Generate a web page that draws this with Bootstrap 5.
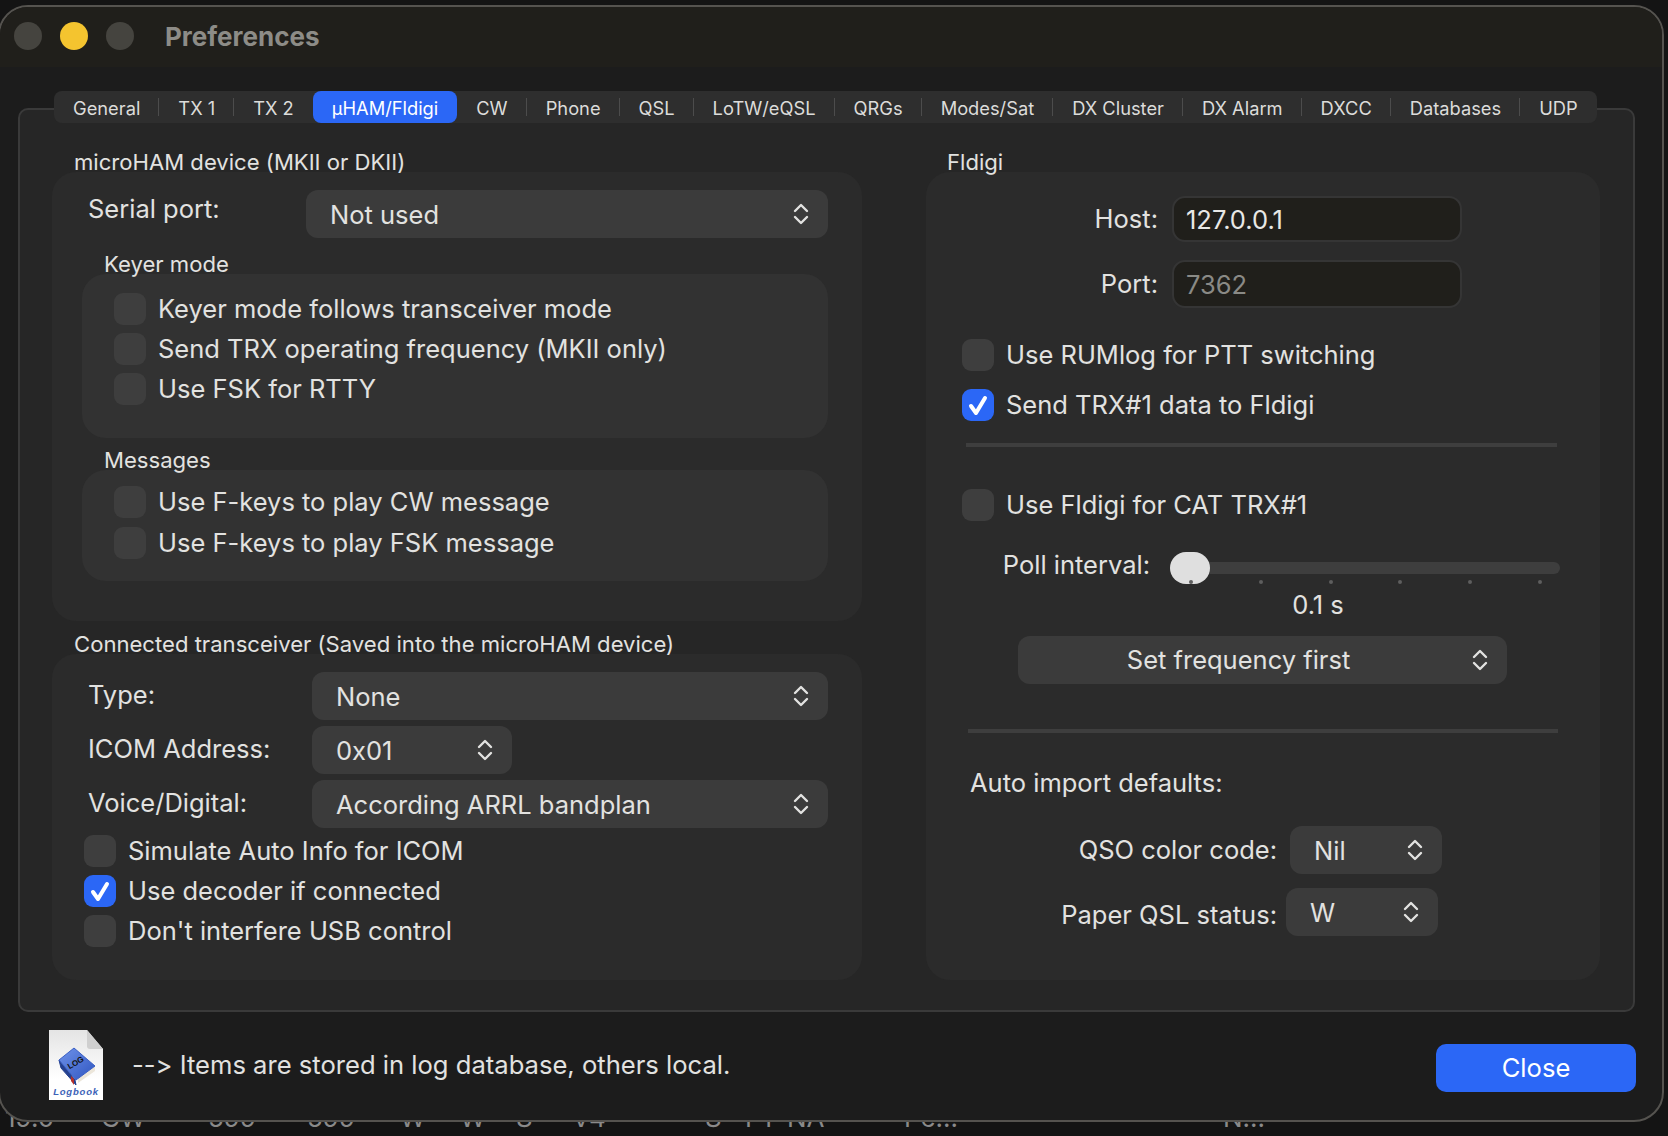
<!DOCTYPE html>
<html lang="en">
<head>
    <meta charset="UTF-8">
    <meta name="viewport" content="width=device-width, initial-scale=1.0">
    <title>Preferences</title>
    <link href="https://cdn.jsdelivr.net/npm/bootstrap@5.3.3/dist/css/bootstrap.min.css" rel="stylesheet">
    <style>
        body {
            background: #141414;
            font-family: Inter, "Liberation Sans", sans-serif;
            font-size: 25.5px;
            font-variant-ligatures: none;
            font-feature-settings: "calt" 0;
            color: #e2e2e0;
            height: 1136px;
            overflow: hidden;
        }
        /* log list behind the window, only its last row peeks out */
        .behind-row {
            display: grid;
            grid-template-columns: 96px 107px 99px 93px 60px 56px 56px 133px 40px 42px 117px 319px auto;
            padding: 1102px 0 0 5px;
            font-size: 26px;
            line-height: 32px;
            color: #8a8a8a;
        }
        .pref-window {
            position: absolute;
            left: -2px;
            top: 5px;
            width: 1666px;
            height: 1117px;
            padding-left: 2px;
            background: #1c1c1c;
            border: 2px solid #55534f;
            border-radius: 30px;
            overflow: hidden;
        }
        .title-bar {
            height: 60px;
            background: #201f1b;
            margin-left: -2px;
            padding: 0 0 2px 14px;
            gap: 18px;
        }
        .light {
            width: 28px;
            height: 28px;
            border-radius: 50%;
            background: #45443f;
        }
        .light-on { background: #f4c42f; }
        .win-title {
            margin-left: 13px;
            font-size: 26px;
            font-weight: 700;
            color: #8d8c87;
        }
        .tab-strip {
            position: relative;
            z-index: 1;
            width: 1543px;
            height: 32px;
            margin: 24px 0 0 52px;
            background: #2e2e2e;
            border-radius: 8px;
            font-size: 18.3px;
        }
        .tab-cell {
            height: 32px;
            padding: 0 19px;
            line-height: 34px;
            white-space: nowrap;
            position: relative;
            color: #dcdcda;
        }
        .tab-cell.sep::after {
            content: "";
            position: absolute;
            right: 0;
            top: 7px;
            height: 18px;
            width: 1px;
            background: #4c4c4c;
        }
        .tab-cell.tab-active {
            background: #2b67f6;
            color: #fff;
            border-radius: 8px;
        }
        .group-box {
            width: 1617px;
            height: 904px;
            margin: -15px 0 0 16px;
            background: #262626;
            border: 2px solid #3a3a3a;
            border-radius: 10px;
            padding: 40px 33px 0 32px;
            gap: 64px;
        }
        .col-left { width: 811px; }
        .col-right { width: 674px; }
        .sect-title {
            height: 24px;
            margin-left: 22px;
            font-size: 22.1px;
            line-height: 24px;
            position: relative;
            z-index: 1;
        }
        .panel-a {
            background: #2b2b2b;
            border-radius: 24px;
            margin-top: -2px;
        }
        .panel-b {
            background: #323232;
            border-radius: 24px;
            margin-left: 30px;
            width: 746px;
            padding-left: 32px;
        }
        .form-select.mac-select {
            height: 48px;
            padding: 2px 40px 0 24px;
            background-color: #3b3b3b;
            background-image: url("data:image/svg+xml,%3csvg xmlns='http://www.w3.org/2000/svg' viewBox='0 0 16 22'%3e%3cpath fill='none' stroke='%23e2e2e0' stroke-width='2.4' stroke-linecap='round' stroke-linejoin='round' d='M2 8l6-6 6 6M2 14l6 6 6-6'/%3e%3c/svg%3e");
            background-size: 16px 22px;
            background-position: right 19px center;
            border: 0;
            border-radius: 12px;
            color: #e2e2e0;
            font-size: 25.5px;
            box-shadow: none;
        }
        .check-row {
            height: 32px;
            gap: 12px;
            white-space: nowrap;
            line-height: 32px;
        }
        .form-check-input.mac-check {
            width: 32px;
            height: 32px;
            margin: 0;
            flex: none;
            background-color: #3e3e3e;
            border: 0;
            border-radius: 9px;
            box-shadow: none;
        }
        .form-check-input.mac-check:checked {
            background-color: #2b67f6;
            background-image: url("data:image/svg+xml,%3csvg xmlns='http://www.w3.org/2000/svg' viewBox='0 0 32 32'%3e%3cpath fill='none' stroke='%23fff' stroke-width='4' stroke-linecap='round' stroke-linejoin='round' d='M9 17l5 7 9-15'/%3e%3c/svg%3e");
            background-size: 32px 32px;
        }
        .left-label { width: 224px; flex: none; padding-top: 4px; }
        .host-label { width: 232px; text-align: right; flex: none; }
        .form-control.mac-input {
            width: 290px;
            height: 46px;
            margin-left: 14px;
            padding: 0 12px;
            background: #201f1b;
            border: 2px solid #353535;
            border-radius: 13px;
            color: #e8e8e6;
            font-size: 25.5px;
            box-shadow: none;
        }
        .form-control.mac-input:disabled { height: 48px; color: #8a8a86; opacity: 1; }
        .panel-rule {
            height: 4px;
            background: #3e3e3e;
            margin-left: 40px;
            width: 591px;
        }
        .poll-label { width: 224px; text-align: right; flex: none; white-space: nowrap; }
        .slider-wrap { width: 390px; margin-left: 20px; }
        .form-range.mac-range {
            height: 32px;
            display: block;
            width: 390px;
        }
        .mac-range::-webkit-slider-runnable-track {
            height: 12px;
            background: #3e3e3e;
            border-radius: 6px;
        }
        .mac-range::-webkit-slider-thumb {
            width: 40px;
            height: 32px;
            margin-top: -10px;
            border-radius: 18px;
            background: #dfdfdf;
            box-shadow: none;
        }
        .tick-row { height: 4px; padding: 0 18px 0 19px; margin-top: -4px; }
        .tick-dot { width: 4px; height: 4px; border-radius: 50%; background: #5e5e5e; }
        .bottom-bar { height: 108px; padding: 0 26px 0 47px; }
        .note-text { margin-left: 29px; margin-top: -1px; font-size: 25.6px; }
        .doc-icon { margin-top: -2px; flex: none; }
        .btn.mac-close {
            width: 200px;
            height: 48px;
            padding: 1px 0 0;
            background: #2b67f6;
            border: 0;
            border-radius: 10px;
            color: #fff;
            font-size: 25.6px;
            margin-top: 4px;
        }
        .import-label { width: 351px; text-align: right; flex: none; white-space: nowrap; }
    </style>
</head>
<body>
    <!-- rest of the log window -->
    <div class="behind-row">
        <span>19.0</span><span>CW</span><span>599</span><span>599</span><span>W</span><span>W</span><span>S</span><span>V4</span><span>S</span><span>FT</span><span>NA</span><span>Pe...</span><span>N...</span>
    </div>

    <div class="pref-window">
        <div class="title-bar d-flex align-items-center">
            <span class="light"></span>
            <span class="light light-on"></span>
            <span class="light"></span>
            <span class="win-title">Preferences</span>
        </div>

        <div class="tab-strip d-flex">
            <div class="tab-cell sep">General</div>
            <div class="tab-cell sep">TX 1</div>
            <div class="tab-cell">TX 2</div>
            <div class="tab-cell tab-active">µHAM/Fldigi</div>
            <div class="tab-cell sep">CW</div>
            <div class="tab-cell sep">Phone</div>
            <div class="tab-cell sep">QSL</div>
            <div class="tab-cell sep">LoTW/eQSL</div>
            <div class="tab-cell sep">QRGs</div>
            <div class="tab-cell sep">Modes/Sat</div>
            <div class="tab-cell sep">DX Cluster</div>
            <div class="tab-cell sep">DX Alarm</div>
            <div class="tab-cell sep">DXCC</div>
            <div class="tab-cell sep">Databases</div>
            <div class="tab-cell">UDP</div>
        </div>

        <div class="group-box d-flex">
            <!-- left column -->
            <div class="col-left">
                <div class="sect-title">microHAM device (MKII or DKII)</div>
                <div class="panel-a" style="height:449px">
                    <div class="d-flex" style="padding:18px 34px 0 36px">
                        <div class="left-label" style="width:218px;padding-top:0">Serial port:</div>
                        <select class="form-select mac-select"><option>Not used</option></select>
                    </div>
                    <div class="sect-title" style="margin:14px 0 -2px 52px">Keyer mode</div>
                    <div class="panel-b" style="height:164px;padding-top:19px">
                        <div class="check-row d-flex"><input class="form-check-input mac-check" type="checkbox"><span>Keyer mode follows transceiver mode</span></div>
                        <div class="check-row d-flex" style="margin-top:8px"><input class="form-check-input mac-check" type="checkbox"><span>Send TRX operating frequency (MKII only)</span></div>
                        <div class="check-row d-flex" style="margin-top:8px"><input class="form-check-input mac-check" type="checkbox"><span>Use FSK for RTTY</span></div>
                    </div>
                    <div class="sect-title" style="margin:10px 0 -2px 52px">Messages</div>
                    <div class="panel-b" style="height:111px;padding-top:16px">
                        <div class="check-row d-flex"><input class="form-check-input mac-check" type="checkbox"><span>Use F-keys to play CW message</span></div>
                        <div class="check-row d-flex" style="margin-top:9px"><input class="form-check-input mac-check" type="checkbox"><span>Use F-keys to play FSK message</span></div>
                    </div>
                </div>

                <div class="sect-title" style="margin-top:11px">Connected transceiver (Saved into the microHAM device)</div>
                <div class="panel-a" style="height:326px;padding:18px 34px 0 36px;margin-top:-2px">
                    <div class="d-flex">
                        <div class="left-label">Type:</div>
                        <select class="form-select mac-select"><option>None</option></select>
                    </div>
                    <div class="d-flex" style="margin-top:6px">
                        <div class="left-label">ICOM Address:</div>
                        <select class="form-select mac-select" style="width:200px"><option>0x01</option></select>
                    </div>
                    <div class="d-flex" style="margin-top:6px">
                        <div class="left-label">Voice/Digital:</div>
                        <select class="form-select mac-select"><option>According ARRL bandplan</option></select>
                    </div>
                    <div class="check-row d-flex" style="margin:7px 0 0 -4px"><input class="form-check-input mac-check" type="checkbox"><span>Simulate Auto Info for ICOM</span></div>
                    <div class="check-row d-flex" style="margin:8px 0 0 -4px"><input class="form-check-input mac-check" type="checkbox" checked><span>Use decoder if connected</span></div>
                    <div class="check-row d-flex" style="margin:8px 0 0 -4px"><input class="form-check-input mac-check" type="checkbox"><span>Don't interfere USB control</span></div>
                </div>
            </div>

            <!-- right column -->
            <div class="col-right">
                <div class="sect-title" style="margin-left:21px">Fldigi</div>
                <div class="panel-a" style="height:808px;padding-top:24px">
                    <div class="d-flex align-items-center">
                        <div class="host-label">Host:</div>
                        <input class="form-control mac-input" type="text" value="127.0.0.1">
                    </div>
                    <div class="d-flex align-items-center" style="margin-top:18px">
                        <div class="host-label">Port:</div>
                        <input class="form-control mac-input" type="text" value="7362" disabled>
                    </div>
                    <div class="check-row d-flex" style="margin:31px 0 0 36px"><input class="form-check-input mac-check" type="checkbox"><span>Use RUMlog for PTT switching</span></div>
                    <div class="check-row d-flex" style="margin:18px 0 0 36px"><input class="form-check-input mac-check" type="checkbox" checked><span>Send TRX#1 data to Fldigi</span></div>
                    <div class="panel-rule" style="margin-top:22px"></div>
                    <div class="check-row d-flex" style="margin:42px 0 0 36px"><input class="form-check-input mac-check" type="checkbox"><span>Use Fldigi for CAT TRX#1</span></div>
                    <div class="d-flex" style="margin-top:31px">
                        <div class="poll-label" style="line-height:26px">Poll interval:</div>
                        <div class="slider-wrap">
                            <input class="form-range mac-range" type="range" min="0" max="5" step="1" value="0">
                            <div class="tick-row d-flex justify-content-between">
                                <span class="tick-dot"></span><span class="tick-dot"></span><span class="tick-dot"></span><span class="tick-dot"></span><span class="tick-dot"></span><span class="tick-dot"></span>
                            </div>
                        </div>
                    </div>
                    <div class="text-center" style="width:784px;height:30px;line-height:30px;margin-top:6px">0.1 s</div>
                    <div style="margin:16px 0 0 92px;width:489px">
                        <select class="form-select mac-select text-center" style="padding-right:72px;padding-top:0"><option>Set frequency first</option></select>
                    </div>
                    <div class="panel-rule" style="margin-top:45px;margin-left:42px;width:590px"></div>
                    <div style="margin:34px 0 0 44px;line-height:32px">Auto import defaults:</div>
                    <div class="d-flex align-items-center" style="margin-top:27px">
                        <div class="import-label">QSO color code:</div>
                        <select class="form-select mac-select" style="width:152px;margin-left:13px"><option>Nil</option></select>
                    </div>
                    <div class="d-flex align-items-center" style="margin-top:14px">
                        <div class="import-label" style="margin-top:6px">Paper QSL status:</div>
                        <select class="form-select mac-select" style="width:152px;margin-left:9px"><option>W</option></select>
                    </div>
                </div>
            </div>
        </div>

        <div class="bottom-bar d-flex align-items-center">
            <!-- logbook document icon -->
            <svg class="doc-icon" width="54" height="70" viewBox="0 0 54 70">
                <defs>
                    <linearGradient id="docFill" x1="0" y1="0" x2="0" y2="1">
                        <stop offset="0" stop-color="#e4e4e4"/>
                        <stop offset="0.7" stop-color="#ffffff"/>
                    </linearGradient>
                    <linearGradient id="coverFill" x1="0" y1="0" x2="1" y2="1">
                        <stop offset="0" stop-color="#6f93ea"/>
                        <stop offset="1" stop-color="#2f55c0"/>
                    </linearGradient>
                </defs>
                <path d="M0 0H38L54 19V70H0Z" fill="url(#docFill)"/>
                <path d="M38 0L54 19H41Q38 19 38 16Z" fill="#cfcfcf"/>
                <path d="M29 47L46 36L46 41L29 53Z" fill="#ece6da"/>
                <path d="M10 30L26 50L27 55L12 38Z" fill="#24408f" stroke="#24408f" stroke-linejoin="round"/>
                <path d="M10 30L25 18L46 36L27 50Z" fill="url(#coverFill)" stroke="#3a5fc4" stroke-linejoin="round"/>
                <path d="M22 46L25 49V55L22 51Z" fill="#b5302a"/>
                <text x="28" y="35" font-size="8" font-weight="700" fill="#111" text-anchor="middle" transform="rotate(-30 28 35)" font-family="Liberation Sans">LOG</text>
                <text x="27" y="65" font-size="9.5" font-weight="700" font-style="italic" letter-spacing="0.8" fill="#3c62b8" text-anchor="middle" font-family="Liberation Sans">Logbook</text>
            </svg>
            <span class="note-text">--&gt; Items are stored in log database, others local.</span>
            <button type="button" class="btn mac-close ms-auto">Close</button>
        </div>
    </div>

    <script src="https://cdn.jsdelivr.net/npm/bootstrap@5.3.3/dist/js/bootstrap.bundle.min.js"></script>
</body>
</html>
